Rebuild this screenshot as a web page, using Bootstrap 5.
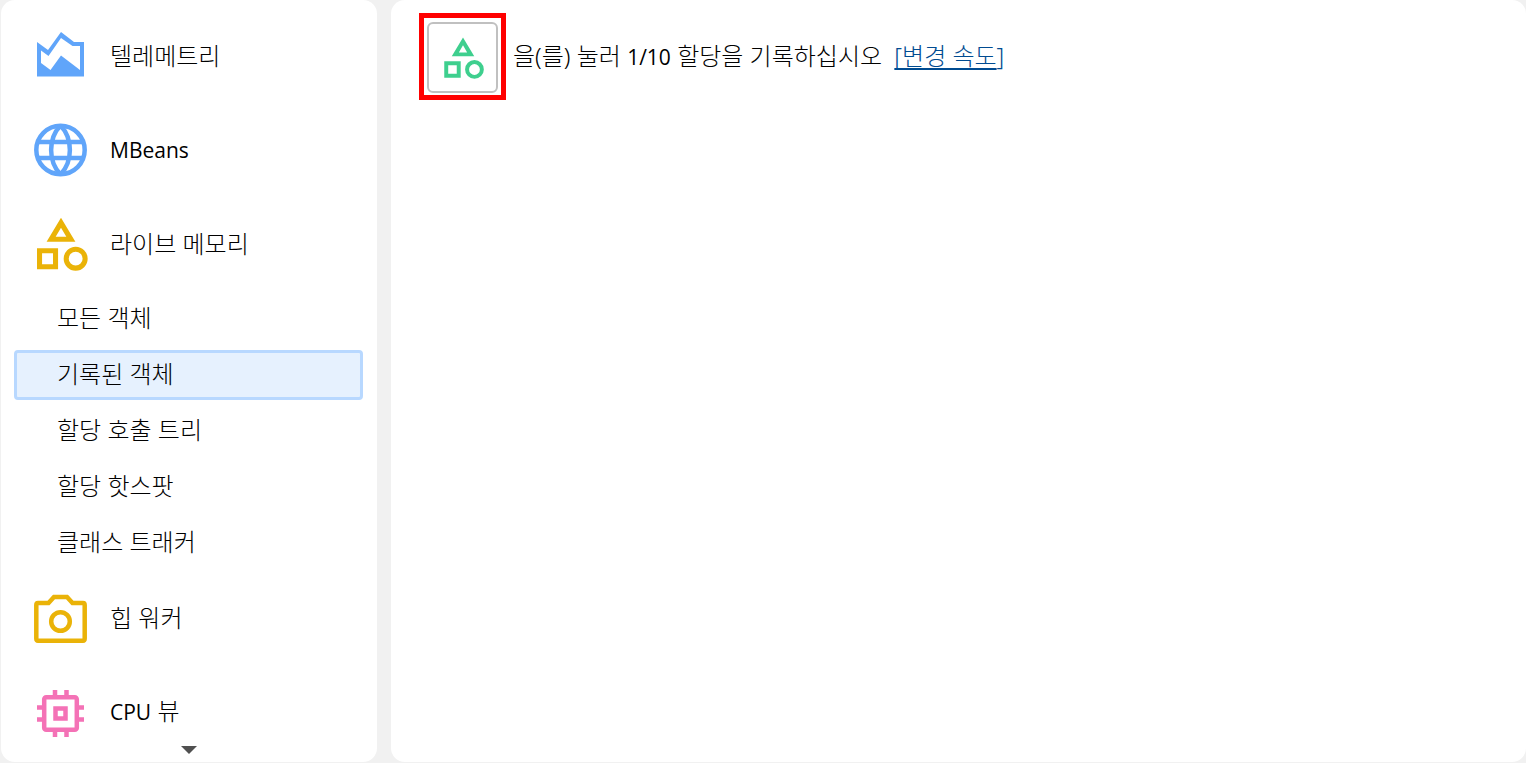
<!DOCTYPE html>
<html lang="ko">
<head>
<meta charset="utf-8">
<meta name="viewport" content="width=device-width, initial-scale=1">
<title>기록된 객체</title>
<link href="https://cdn.jsdelivr.net/npm/bootstrap@5.3.0/dist/css/bootstrap.min.css" rel="stylesheet">
<style>
  body { background: #f1f1f1; color: #000; font-family: "Noto Sans", "Noto Sans CJK KR", sans-serif; font-size: 24px; font-weight: 300; line-height: 32px; }
  .app-shell { gap: 14px; padding: 0 0 1px 1px; }
  .side-panel { width: 376px; padding: 9px 14px 3px 13px; border-radius: 14px; }
  .main-panel { border-radius: 14px; padding: 13px 28px; }
  .view-link { height: 94px; padding-left: 15px; gap: 17px; color: #000; text-decoration: none; }
  .view-link svg { width: 64px; height: 64px; flex: none; }
  .view-link > span { padding-bottom: 1px; }
  .sub-views { gap: 6px; padding: 3px 0; }
  .sub-link { height: 50px; padding: 0 0 2px 40px; border: 3px solid transparent; border-radius: 4px; color: #000; text-decoration: none; }
  .sub-link.active { background: #e6f1fe; border-color: #b8d8ff; }
  .latin { font-family: "Open Sans", "Noto Sans CJK KR", sans-serif; font-size: 21px; font-weight: 400; }
  .blue { color: #60a5fa; } .amber { color: #eab308; } .pink { color: #f472b6; }
  .scroll-more { bottom: 8px; width: 16px; height: 8px; }
  .record-frame { border: 5px solid #f00; padding: 4px 3px 2px; }
  .record-btn { width: 71px; height: 71px; border: 2px solid #c0c0c0; border-radius: 6px; background: #fff; color: #3ecf8e; }
  .record-btn svg { width: 50px; height: 50px; flex: none; }
  .record-line { gap: 7px; }
  .rate-link { margin-left: 6px; color: #004b91; text-decoration: none; }
  .rate-text { text-decoration: underline; text-decoration-thickness: 2px; text-underline-offset: 3px; text-decoration-skip-ink: none; }
</style>
</head>
<body>
<svg class="d-none" aria-hidden="true">
  <symbol id="shapes" viewBox="0 0 24 24"><path fill="currentColor" fill-rule="evenodd" d="M12 2.200l-5.400 9h10.800zM12 5.900L14 9.300h-4zM17.500 13a4.500 4.500 0 1 0 0 9a4.500 4.500 0 1 0 0-9zM17.500 14.900a2.600 2.600 0 1 1 0 5.200a2.600 2.600 0 1 1 0-5.200zM3 13.600h7.900v7.900H3zM4.900 15.500v4.100h4.100v-4.100z"/></symbol>
</svg>
<div class="app-shell d-flex min-vh-100">
  <nav class="side-panel bg-white position-relative flex-shrink-0">
    <a href="#" class="view-link d-flex align-items-center">
      <svg class="blue" viewBox="0 0 64 64"><path fill="currentColor" fill-rule="evenodd" d="M8 18L19 26L32 8L45 18H55V52.500H8ZM12 26.500V39L21.500 46L32 31.500L51 46V22H43.500L32 14L19.500 32Z"/></svg>
      <span>텔레메트리</span>
    </a>
    <a href="#" class="view-link d-flex align-items-center">
      <svg class="blue" viewBox="0 0 64 64" fill="none" stroke="currentColor" stroke-width="4.500"><circle cx="31.500" cy="32" r="24.200"/><path d="M8 24H55M8 40H55M31.500 7.500C19 20.500 19 43.500 31.500 56.500M31.500 7.500C44 20.500 44 43.500 31.500 56.500"/></svg>
      <span class="latin">MBeans</span>
    </a>
    <a href="#" class="view-link d-flex align-items-center">
      <svg class="amber"><use href="#shapes"/></svg>
      <span>라이브 메모리</span>
    </a>
    <div class="sub-views d-flex flex-column">
      <a href="#" class="sub-link d-flex align-items-center">모든 객체</a>
      <a href="#" class="sub-link active d-flex align-items-center" aria-current="page">기록된 객체</a>
      <a href="#" class="sub-link d-flex align-items-center">할당 호출 트리</a>
      <a href="#" class="sub-link d-flex align-items-center">할당 핫스팟</a>
      <a href="#" class="sub-link d-flex align-items-center">클래스 트래커</a>
    </div>
    <a href="#" class="view-link d-flex align-items-center">
      <svg class="amber" viewBox="0 0 64 64" fill="none" stroke="currentColor" stroke-width="4.500"><path d="M9.500 17H19.500L25 11H38L43.500 17H54Q55.700 17 55.700 19V52.500Q55.700 54.700 54 54.700H9Q7.300 54.700 7.300 52.500V19Q7.300 17 9 17Z"/><circle cx="31.500" cy="35.500" r="9.300"/></svg>
      <span>힙 워커</span>
    </a>
    <a href="#" class="view-link d-flex align-items-center">
      <svg class="pink" viewBox="0 0 64 64" fill="none" stroke="currentColor" stroke-width="4.500"><rect x="15.200" y="17.200" width="32.600" height="32.600" rx="2"/><rect x="26.500" y="28.500" width="10" height="10"/><path d="M26 10V16M37.500 10V16M26 51V57M37.500 51V57M8 27.500H14M8 39.500H14M49 27.500H55M49 39.500H55"/></svg>
      <span><span class="latin">CPU</span> 뷰</span>
    </a>
    <svg class="scroll-more position-absolute start-50 translate-middle-x" viewBox="0 0 16 8" aria-hidden="true"><path fill="#505050" d="M0 0H16L8 8z"/></svg>
  </nav>
  <main class="main-panel bg-white flex-grow-1">
    <div class="record-line d-flex align-items-center">
      <div class="record-frame">
        <button type="button" class="record-btn d-flex align-items-center justify-content-center p-0" aria-label="할당 기록"><svg><use href="#shapes"/></svg></button>
      </div>
      <div>을(를) 눌러 <span class="latin">1/10</span> 할당을 기록하십시오 <a href="#" class="rate-link"><span class="rate-text">[변경 속도</span>]</a></div>
    </div>
  </main>
</div>
<script src="https://cdn.jsdelivr.net/npm/bootstrap@5.3.0/dist/js/bootstrap.bundle.min.js"></script>
</body>
</html>
